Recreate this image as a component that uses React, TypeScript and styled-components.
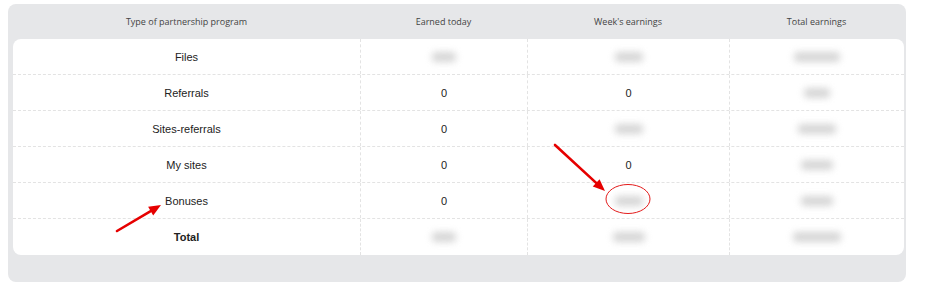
import React from 'react';
import styled, { createGlobalStyle } from 'styled-components';

const GlobalStyle = createGlobalStyle`
    body {
        margin: 0;
        background: #ffffff;
    }
`;

const COLUMNS = '347px 167px 202px 175px';

const Page = styled.div`
    position: relative;
    padding: 4px 0 0 8px;
    width: 931px;
    height: 291px;
    box-sizing: border-box;
`;

const Panel = styled.div`
    width: 898px;
    height: 278px;
    box-sizing: border-box;
    padding: 0 2px 0 5px;
    background: #e6e7e9;
    border-radius: 8px;
`;

const HeaderRow = styled.div`
    display: grid;
    grid-template-columns: ${COLUMNS};
    height: 35px;
    align-items: center;
    font-family: 'Open Sans', 'DejaVu Sans', sans-serif;
    font-size: 9px;
    color: #444;
    text-align: center;
`;

const Card = styled.div`
    background: #ffffff;
    border-radius: 8px;
    overflow: hidden;
`;

const Row = styled.div`
    display: grid;
    grid-template-columns: ${COLUMNS};
    height: 36px;
    box-sizing: border-box;
    &:first-child {
        height: 35px;
    }
    &:last-child {
        height: 37px;
    }
    & + & {
        border-top: 1px dashed #e3e3e3;
    }
`;

const Cell = styled.div<{ $bold?: boolean }>`
    display: flex;
    align-items: center;
    justify-content: center;
    font-family: 'Liberation Sans', Arial, sans-serif;
    font-size: 11px;
    font-weight: ${p => (p.$bold ? 700 : 400)};
    color: #222;
    & + & {
        border-left: 1px dashed #e3e3e3;
    }
`;

const Hidden = styled.span<{ $w: number }>`
    display: inline-block;
    width: ${p => p.$w}px;
    height: 10px;
    background: #cfcfcf;
    border-radius: 4px;
    filter: blur(3.5px);
    opacity: 0.85;
`;

const Overlay = styled.svg`
    position: absolute;
    left: 0;
    top: 0;
    pointer-events: none;
`;

type Value = number | string;

const rows: { name: string; bold?: boolean; values: Value[] }[] = [
    { name: 'Files', values: [24, 28, 46] },
    { name: 'Referrals', values: ['0', '0', 26] },
    { name: 'Sites-referrals', values: ['0', 28, 38] },
    { name: 'My sites', values: ['0', '0', 32] },
    { name: 'Bonuses', values: ['0', 28, 32] },
    { name: 'Total', bold: true, values: [24, 32, 48] },
];

const renderValue = (v: Value) =>
    typeof v === 'string' ? v : <Hidden $w={v} />;

const Arrow: React.FC<{ x1: number; y1: number; x2: number; y2: number }> = ({ x1, y1, x2, y2 }) => {
    const angle = Math.atan2(y2 - y1, x2 - x1);
    const len = 12;
    const half = 5;
    const bx = x2 - len * Math.cos(angle);
    const by = y2 - len * Math.sin(angle);
    const px = -Math.sin(angle) * half;
    const py = Math.cos(angle) * half;
    return (
        <g fill="#e60000" stroke="#e60000">
            <line x1={x1} y1={y1} x2={bx} y2={by} strokeWidth={2.6} strokeLinecap="round" />
            <polygon
                points={`${x2},${y2} ${bx + px},${by + py} ${bx - px},${by - py}`}
                stroke="none"
            />
        </g>
    );
};

const App: React.FC = () => {
    return (
        <Page>
            <GlobalStyle />
            <Panel>
                <HeaderRow>
                    <div>Type of partnership program</div>
                    <div>Earned today</div>
                    <div>Week's earnings</div>
                    <div>Total earnings</div>
                </HeaderRow>
                <Card>
                    {rows.map(r => (
                        <Row key={r.name}>
                            <Cell $bold={r.bold}>{r.name}</Cell>
                            {r.values.map((v, i) => (
                                <Cell key={i}>{renderValue(v)}</Cell>
                            ))}
                        </Row>
                    ))}
                </Card>
            </Panel>
            <Overlay width={931} height={291}>
                <Arrow x1={117} y1={231} x2={161} y2={205} />
                <Arrow x1={555} y1={145} x2={605} y2={191} />
                <ellipse cx={628} cy={199} rx={22} ry={14.5} fill="none" stroke="#e31b1b" strokeWidth={1} />
            </Overlay>
        </Page>
    );
};

export default App;
